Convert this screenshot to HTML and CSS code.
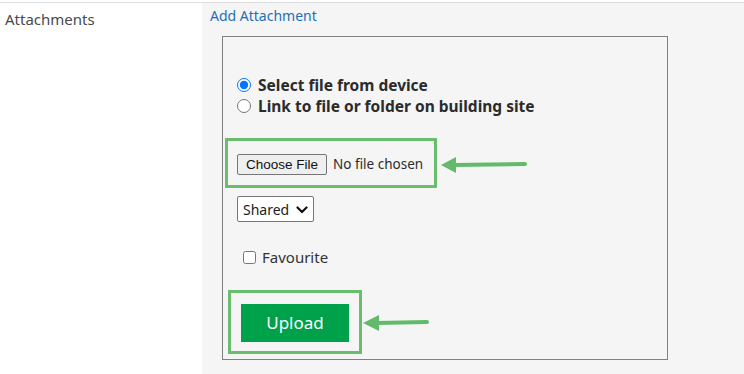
FILE: index.html
```html
<!DOCTYPE html>
<html lang="en">
<head>
<meta charset="UTF-8">
<meta name="viewport" content="width=device-width, initial-scale=1.0">
<title>Attachments</title>
<link rel="stylesheet" href="styles.css">
</head>
<body>
    <div class="field-row">
        <div class="field-label">Attachments</div>
        <div class="field-value">
            <a class="add-link" href="#">Add Attachment</a>
            <div class="upload-box">
                <div class="source-list">
                    <label class="source-option bold">
                        <input type="radio" name="source" checked> Select file from device
                    </label>
                    <label class="source-option bold">
                        <input type="radio" name="source"> Link to file or folder on building site
                    </label>
                </div>

                <div class="highlight file-highlight">
                    <input type="file" class="file-input">
                </div>

                <div class="select-wrap">
                    <select class="share-select">
                        <option>Shared</option>
                        <option>Private</option>
                    </select>
                    <svg class="chevron" width="12" height="8" viewBox="0 0 12 8">
                        <path d="M1.5 1.5 L6 6 L10.5 1.5" fill="none" stroke="#111" stroke-width="2.2" stroke-linecap="round" stroke-linejoin="round"/>
                    </svg>
                </div>

                <label class="fav-option">
                    <input type="checkbox"> Favourite
                </label>

                <div class="highlight upload-highlight">
                    <button class="upload-btn">Upload</button>
                </div>

                <!-- annotation arrows -->
                <svg class="arrow arrow-file" width="90" height="20" viewBox="0 0 90 20">
                    <path d="M2 10 L17 2 L17 18 Z" fill="#63ba6b"/>
                    <path d="M15 10 L86 9" stroke="#63ba6b" stroke-width="4" stroke-linecap="round"/>
                </svg>
                <svg class="arrow arrow-upload" width="70" height="20" viewBox="0 0 70 20">
                    <path d="M2 10 L18 2 L18 18 Z" fill="#63ba6b"/>
                    <path d="M16 10 L66 9" stroke="#63ba6b" stroke-width="4" stroke-linecap="round"/>
                </svg>
            </div>
        </div>
    </div>
</body>
</html>
```

FILE: styles.css
```css
body {
    margin: 0;
    padding-top: 2px;
    background: #fff;
    font-family: "Noto Sans", "Open Sans", sans-serif;
    color: #333;
}

.field-row {
    display: flex;
    border-top: 1px solid #dcdcdc;
    min-height: 371px;
}

.field-label {
    width: 197px;
    padding: 6px 0 0 5px;
    font-size: 15px;
    color: #4a4a4a;
}

.field-value {
    flex: 1;
    background: #f5f5f5;
    padding: 4px 0 0 8px;
}

.add-link {
    display: block;
    font-size: 14px;
    line-height: 18px;
    color: #1f6fb6;
    text-decoration: none;
}

.upload-box {
    position: relative;
    box-sizing: border-box;
    width: 446px;
    height: 324px;
    margin: 11px 0 0 12px;
    border: 1px solid #808080;
}

.source-list {
    padding: 37px 0 0 14px;
}

.source-option {
    display: flex;
    align-items: center;
    height: 21px;
    font-size: 15.5px;
    color: #2b2b2b;
}

.bold {
    font-weight: 700;
}

.source-option input {
    width: 14px;
    height: 14px;
    margin: 0 7px 0 0;
}

.highlight {
    box-sizing: border-box;
    border: 3px solid #6abd6c;
    display: flex;
    align-items: center;
}

.file-highlight {
    width: 212px;
    height: 50px;
    margin: 22px 0 0 2px;
    padding: 3px 0 0 9px;
}

.file-input {
    font-family: "Noto Sans", "Open Sans", sans-serif;
    font-size: 13.5px;
    color: #2b2b2b;
}

.file-input::file-selector-button {
    font-family: "Liberation Sans", Arial, sans-serif;
    font-size: 13.5px;
    height: 21px;
    padding: 0 8px;
    margin-right: 6px;
    background: #efefef;
    border: 1px solid #767676;
    border-radius: 2px;
    color: #111;
}

.select-wrap {
    position: relative;
    display: inline-block;
    margin: 8px 0 0 14px;
}

.share-select {
    appearance: none;
    -webkit-appearance: none;
    width: 77px;
    height: 26px;
    padding: 0 0 0 5px;
    font-family: "Noto Sans", "Open Sans", sans-serif;
    font-size: 14px;
    color: #222;
    background: #fff;
    border: 1px solid #767676;
    border-radius: 2px;
}

.chevron {
    position: absolute;
    right: 6px;
    top: 10px;
    pointer-events: none;
}

.fav-option {
    display: flex;
    align-items: center;
    height: 20px;
    margin: 25px 0 0 20px;
    font-size: 15px;
    color: #333;
}

.fav-option input {
    width: 13px;
    height: 13px;
    margin: 1px 6px 0 0;
}

.upload-highlight {
    width: 134px;
    height: 64px;
    margin: 23px 0 0 5px;
    padding: 1px 0 0 10px;
}

.upload-btn {
    width: 108px;
    height: 38px;
    border: none;
    background: #00a14b;
    color: #fff;
    font-family: "Noto Sans", "Open Sans", sans-serif;
    font-size: 17px;
    cursor: pointer;
}

.arrow {
    position: absolute;
}

.arrow-file {
    left: 216px;
    top: 118px;
}

.arrow-upload {
    left: 138px;
    top: 276px;
}
```
